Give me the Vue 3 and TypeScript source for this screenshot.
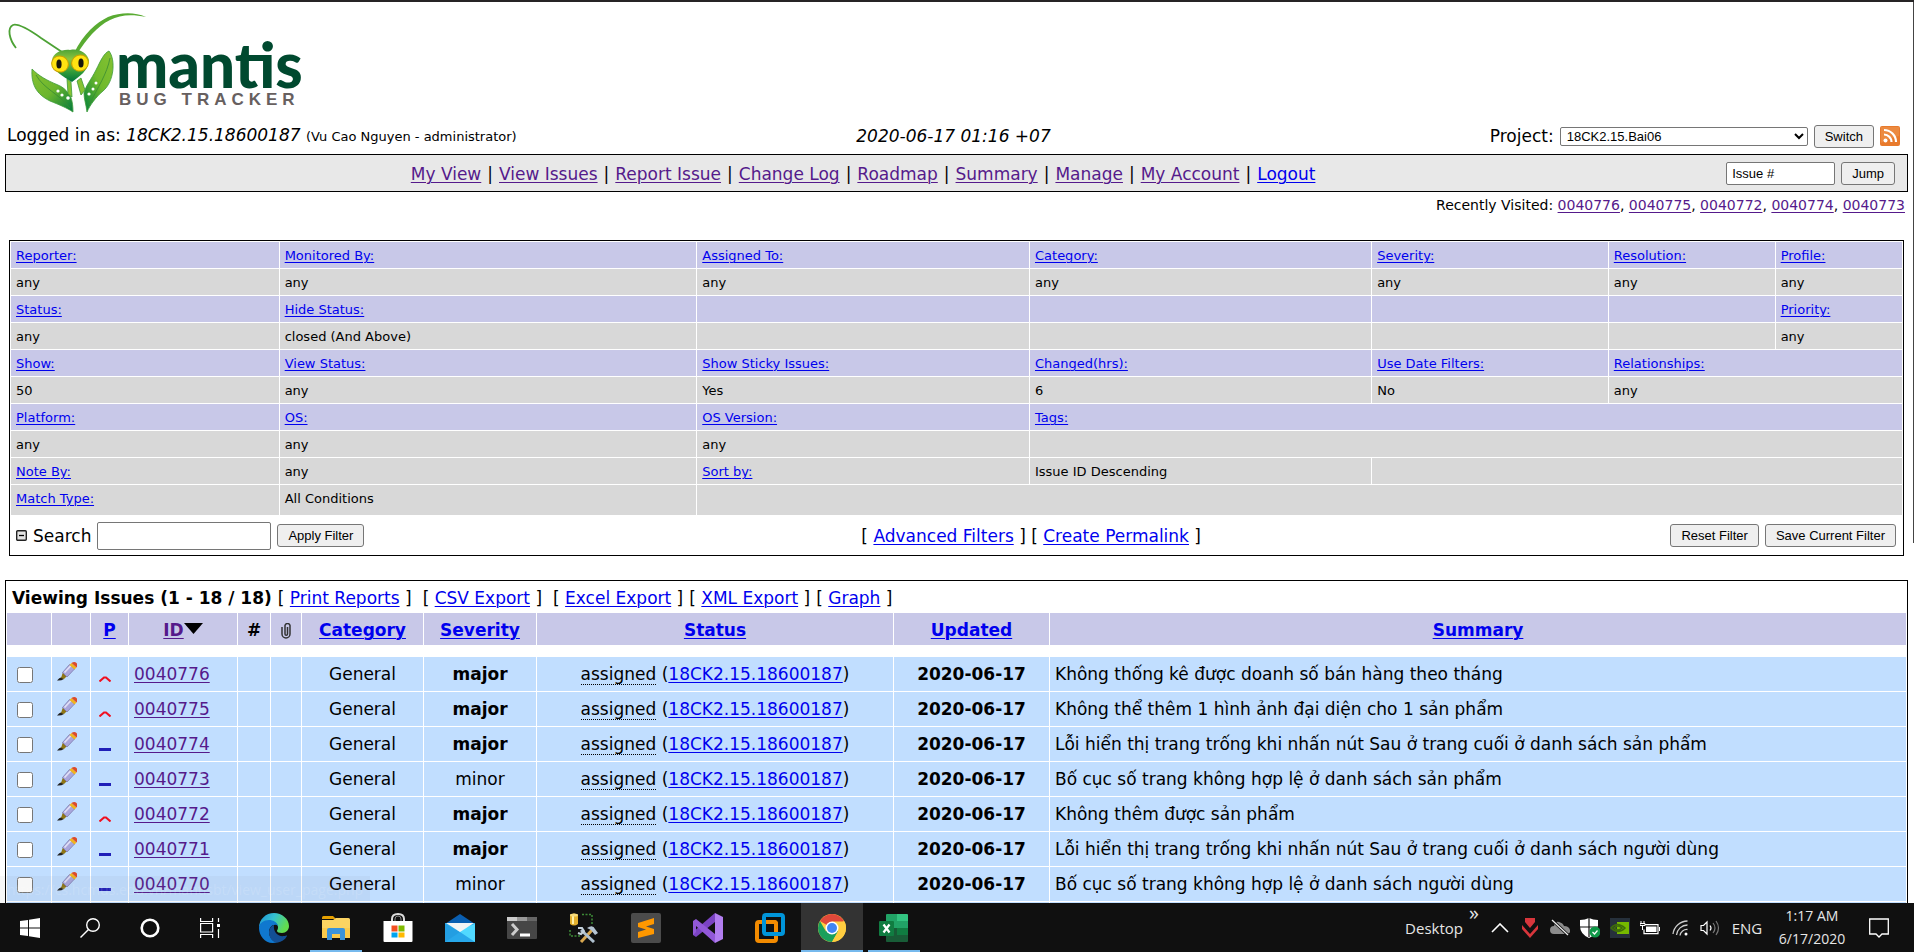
<script setup lang="ts">
import { ref } from 'vue'

interface FilterCell {
  text?: string
  link?: boolean
  span?: number
}
interface FilterRow {
  head: boolean
  cells: FilterCell[]
}
interface Issue {
  id: string
  high: boolean
  severity: string
  summary: string
}

const navLinks = ['My View', 'View Issues', 'Report Issue', 'Change Log', 'Roadmap', 'Summary', 'Manage', 'My Account', 'Logout']
const recent = ['0040776', '0040775', '0040772', '0040774', '0040773']

const heads = (items: FilterCell[]): FilterRow => ({ head: true, cells: items })
const values = (items: FilterCell[]): FilterRow => ({ head: false, cells: items })
const l = (text: string, span = 1): FilterCell => ({ text, link: true, span })
const t = (text = '', span = 1): FilterCell => ({ text, span })

const filterRows: FilterRow[] = [
  heads([l('Reporter:'), l('Monitored By:'), l('Assigned To:'), l('Category:'), l('Severity:'), l('Resolution:'), l('Profile:')]),
  values([t('any'), t('any'), t('any'), t('any'), t('any'), t('any'), t('any')]),
  heads([l('Status:'), l('Hide Status:'), t(), t(), t(), t(), l('Priority:')]),
  values([t('any'), t('closed (And Above)'), t(), t(), t(), t(), t('any')]),
  heads([l('Show:'), l('View Status:'), l('Show Sticky Issues:'), l('Changed(hrs):'), l('Use Date Filters:'), l('Relationships:', 2)]),
  values([t('50'), t('any'), t('Yes'), t('6'), t('No'), t('any', 2)]),
  heads([l('Platform:'), l('OS:'), l('OS Version:'), l('Tags:', 4)]),
  values([t('any'), t('any'), t('any'), t('', 4)]),
  values([l('Note By:'), t('any'), l('Sort by:'), t('Issue ID Descending'), t('', 3)]),
  values([l('Match Type:'), t('All Conditions'), t('', 5)]),
]

const exportLinks = ['Print Reports', 'CSV Export', 'Excel Export', 'XML Export', 'Graph']
const assignee = '18CK2.15.18600187'

const issues: Issue[] = [
  { id: '0040776', high: true, severity: 'major', summary: 'Không thống kê được doanh số bán hàng theo tháng' },
  { id: '0040775', high: true, severity: 'major', summary: 'Không thể thêm 1 hình ảnh đại diện cho 1 sản phẩm' },
  { id: '0040774', high: false, severity: 'major', summary: 'Lỗi hiển thị trang trống khi nhấn nút Sau ở trang cuối ở danh sách sản phẩm' },
  { id: '0040773', high: false, severity: 'minor', summary: 'Bố cục số trang không hợp lệ ở danh sách sản phẩm' },
  { id: '0040772', high: true, severity: 'major', summary: 'Không thêm được sản phẩm' },
  { id: '0040771', high: false, severity: 'major', summary: 'Lỗi hiển thị trang trống khi nhấn nút Sau ở trang cuối ở danh sách người dùng' },
  { id: '0040770', high: false, severity: 'minor', summary: 'Bố cục số trang không hợp lệ ở danh sách người dùng' },
]

const project = ref('18CK2.15.Bai06')
const jumpTo = ref('Issue #')
const search = ref('')
const selected = ref<string[]>([])
</script>

<template>
  <div class="desktop">
    <main class="page">
      <svg class="logo" viewBox="0 2 310 111" role="img" aria-label="Mantis Bug Tracker">
        <defs>
          <linearGradient id="leaf" x1="0" y1="0" x2="1" y2="1">
            <stop offset="0" stop-color="#86c232" />
            <stop offset="0.5" stop-color="#6bb52d" />
            <stop offset="1" stop-color="#007a3d" />
          </linearGradient>
          <linearGradient id="leafRight" x1="1" y1="0" x2="0" y2="1">
            <stop offset="0" stop-color="#86c232" />
            <stop offset="0.5" stop-color="#6fb92c" />
            <stop offset="1" stop-color="#00803c" />
          </linearGradient>
          <linearGradient id="face" x1="0" y1="0" x2="0" y2="1">
            <stop offset="0" stop-color="#4fa336" />
            <stop offset="0.3" stop-color="#8cc63f" />
            <stop offset="0.7" stop-color="#2f9a3a" />
            <stop offset="1" stop-color="#00743b" />
          </linearGradient>
        </defs>
        <path d="M16 48C9 39 7 28 13 25C19 23 31 31 41 38L65 54" fill="none" stroke="#4da235" stroke-width="1.800" />
        <path d="M74 53C84 33 96 23 108 17C121 12 135 12 146 17C131 14 120 15 110 20C96 27 87 39 77 54Z" fill="#59ab32" />
        <path d="M32 69C31 84 36 94 50 101C60 105 67 108 73 112C73 105 72 98 69 94C66 90 63 87 58 85C46 80 39 76 32 69Z" fill="url(#leaf)" stroke="#3c9b38" stroke-width=".8" />
        <path d="M109 51C116 60 114 82 103 91C96 97 90 105 87 112C86 104 84 99 84 93C86 85 91 80 96 70C101 60 104 53 109 51Z" fill="url(#leafRight)" stroke="#3c9b38" stroke-width=".8" />
        <path d="M36 75C44 89 58 93 70 108M110 58C107 74 98 87 89 105" fill="none" stroke="#3a8a33" stroke-width=".8" />
        <path d="M67 79L71 82L72 97L68 94ZM77 81L81 78L85 90L81 95Z" fill="#86c232" stroke="#3c9b38" stroke-width=".8" />
        <path d="M52 60C53 53 62 49 70 50C79 48 87 53 89 60C88 71 80 76 72 82C62 76 53 71 52 60Z" fill="url(#face)" />
        <ellipse cx="60" cy="64" rx="8.500" ry="8" fill="#ffe312" stroke="#c8a200" transform="rotate(25 60 64)" />
        <ellipse cx="80" cy="63" rx="8.500" ry="8" fill="#ffe312" stroke="#c8a200" transform="rotate(-25 80 63)" />
        <ellipse cx="59" cy="64" rx="2.600" ry="4.500" fill="#17150c" />
        <ellipse cx="81" cy="63" rx="2.600" ry="4.500" fill="#17150c" />
        <g fill="#fff"><circle cx="58" cy="91" r="1.600" /><circle cx="62" cy="95" r="1.600" /><circle cx="68" cy="98" r="1.800" /><circle cx="96" cy="83" r="1.500" /><circle cx="93" cy="89" r="1.500" /><circle cx="89" cy="94" r="1.600" /></g>
        <text class="logo-name" x="116" y="88">mantis</text>
        <text class="logo-sub" x="119" y="105">BUG TRACKER</text>
      </svg>

      <header class="login">
        <div>Logged in as: <i>18CK2.15.18600187</i> <span class="small">(Vu Cao Nguyen - administrator)</span></div>
        <time class="now">2020-06-17 01:16 +07</time>
        <form class="project" @submit.prevent>
          <label for="project">Project:</label>
          <select id="project" v-model="project"><option>18CK2.15.Bai06</option></select>
          <button type="submit">Switch</button>
          <a href="#" class="rss" aria-label="RSS">
            <svg width="20" height="20" viewBox="0 0 20 20">
              <rect width="20" height="20" rx="2" fill="#e87a2c" />
              <path d="M1 1h18v9Q10 12 1 17z" fill="#f09a54" opacity=".5" />
              <circle cx="5.500" cy="14.500" r="2" fill="#fff" />
              <path d="M4 8.500a7.500 7.500 0 0 1 7.500 7.500M4 4a12 12 0 0 1 12 12" fill="none" stroke="#fff" stroke-width="2.200" />
            </svg>
          </a>
        </form>
      </header>

      <nav class="menu">
        <div class="menu-links">
          <template v-for="(name, i) in navLinks" :key="name">
            <span v-if="i">|</span>
            <a href="#" :class="{ visited: name !== 'Logout' }">{{ name }}</a>
          </template>
        </div>
        <form class="jump" @submit.prevent>
          <input v-model="jumpTo" type="text" aria-label="Issue number" />
          <button type="submit">Jump</button>
        </form>
      </nav>

      <p class="recent">
        Recently Visited: <template v-for="(id, i) in recent" :key="id"><template v-if="i">, </template><a href="#" class="visited">{{ id }}</a></template>
      </p>

      <form class="filter" @submit.prevent>
        <table class="filter-table">
          <colgroup>
            <col v-for="n in 7" :key="n" :class="'f' + n" />
          </colgroup>
          <tbody>
            <tr v-for="(row, r) in filterRows" :key="r" :class="{ head: row.head }">
              <td v-for="(cell, c) in row.cells" :key="c" :colspan="cell.span">
                <a v-if="cell.link" href="#">{{ cell.text }}</a>
                <template v-else>{{ cell.text }}</template>
              </td>
            </tr>
          </tbody>
        </table>
        <div class="search-row">
          <div class="search-box">
            <svg width="11" height="11" viewBox="0 0 11 11" aria-hidden="true">
              <rect x=".7" y=".7" width="9.600" height="9.600" rx="1" fill="#e4e4e4" stroke="#222" stroke-width="1.400" />
              <path d="M3 5.500h5" stroke="#000" stroke-width="1.300" />
            </svg>
            <label for="search">Search</label>
            <input id="search" v-model="search" type="text" />
            <button type="submit">Apply Filter</button>
          </div>
          <div class="search-links">[ <a href="#">Advanced Filters</a> ] [ <a href="#">Create Permalink</a> ]</div>
          <div class="search-end">
            <button type="reset">Reset Filter</button>
            <button type="button">Save Current Filter</button>
          </div>
        </div>
      </form>

      <section class="issues">
        <div class="issues-title">
          <b>Viewing Issues (1 - 18 / 18)</b>
          <span v-for="(name, i) in exportLinks" :key="name" :class="{ apart: i === 1 || i === 2 }">[ <a href="#">{{ name }}</a> ]</span>
        </div>
        <table class="issue-table">
          <colgroup>
            <col v-for="n in 11" :key="n" :class="'c' + n" />
          </colgroup>
          <thead>
            <tr>
              <th></th>
              <th></th>
              <th><a href="#">P</a></th>
              <th><a href="#" class="visited">ID</a><svg class="sort" width="19" height="11" viewBox="0 0 19 11"><path d="M0 0h19L9.500 11z" /></svg></th>
              <th>#</th>
              <th>
                <svg width="12" height="16" viewBox="0 0 12 16" fill="none" stroke="#333" aria-label="Attachments">
                  <path d="M2 4v7a4 4 0 0 0 8 0V3.500a2.500 2.500 0 0 0-5-1V11a1 1 0 0 0 2.500 0V4" stroke-width="1.500" />
                </svg>
              </th>
              <th><a href="#">Category</a></th>
              <th><a href="#">Severity</a></th>
              <th><a href="#">Status</a></th>
              <th><a href="#">Updated</a></th>
              <th><a href="#">Summary</a></th>
            </tr>
          </thead>
          <tbody>
            <tr class="gap"><td colspan="11"></td></tr>
            <tr v-for="issue in issues" :key="issue.id">
              <td><input v-model="selected" type="checkbox" :value="issue.id" :aria-label="'Select ' + issue.id" /></td>
              <td>
                <a href="#" class="icon-link" aria-label="Edit">
                  <svg width="20" height="20" viewBox="0 0 20 20">
                    <path d="M0 18.500q2-3 5-3.500l2 2q-3 2-7 1.500z" fill="#222" />
                    <path d="M4 16l2-6 4 4-3 3z" fill="#8f7615" />
                    <path d="M5.500 10.500l7-8 5 4.500-7.500 8z" fill="#a9a6dc" stroke="#7773a8" stroke-width=".7" />
                    <path d="M7.500 10.500l6.500-7" stroke="#e0dff6" stroke-width="1.800" />
                    <path d="M12.500 3l2-2 5 4.500-2 2z" fill="#f2b51d" />
                    <path d="M14.500 1q3-2 5 0t0 4.500z" fill="#dc4b2a" />
                  </svg>
                </a>
              </td>
              <td class="priority">
                <svg v-if="issue.high" width="12" height="6" viewBox="0 0 12 6"><path d="M.5 5.500L5 1.500h2l4.500 4" fill="none" stroke="#f01020" stroke-width="2" /></svg>
                <svg v-else width="12" height="6" viewBox="0 0 12 6"><path d="M0 3.500h12" stroke="#1f1fb8" stroke-width="3" /></svg>
              </td>
              <td class="left"><a href="#" class="visited">{{ issue.id }}</a></td>
              <td></td>
              <td></td>
              <td>General</td>
              <td :class="{ strong: issue.severity === 'major' }">{{ issue.severity }}</td>
              <td><span class="state">assigned</span> (<a href="#">{{ assignee }}</a>)</td>
              <td class="strong">2020-06-17</td>
              <td class="left">{{ issue.summary }}</td>
            </tr>
            <tr><td v-for="n in 11" :key="n"></td></tr>
          </tbody>
        </table>
      </section>
      <div class="status-hint">https://cs.hcmus.edu.vn/mantisbt/view_user_page.php</div>
    </main>

    <footer class="taskbar">
      <button class="sys" aria-label="Start">
        <svg width="20" height="20" viewBox="0 0 20 20" fill="#fff"><path d="M0 3l8-1v7.500H0zM9 1.800L20 0v9.500H9zM0 10.500h8V18l-8-1zM9 10.500h11V20L9 18.200z" /></svg>
      </button>
      <button class="sys" aria-label="Search">
        <svg width="20" height="20" viewBox="0 0 20 20" fill="none" stroke="#fff" stroke-width="1.400"><circle cx="13" cy="7" r="6.300" /><path d="M8.500 11.500L.5 19.500" /></svg>
      </button>
      <button class="sys" aria-label="Cortana">
        <svg width="20" height="20" viewBox="0 0 20 20"><circle cx="10" cy="10" r="8.300" fill="none" stroke="#fff" stroke-width="2.600" /></svg>
      </button>
      <button class="sys" aria-label="Task view">
        <svg width="20" height="20" viewBox="0 0 20 20" fill="none" stroke="#fff" stroke-width="1.200"><path d="M.6 0v3.500h12V0M.6 20v-3.500h12V20M.6 5.500h12v8.500H.6zM18.500 0v4M18.500 11v9" /><rect x="17" y="6" width="3" height="3" fill="#fff" stroke="none" /></svg>
      </button>
      <span class="gap-small"></span>
      <button class="app" aria-label="Edge">
        <svg width="30" height="30" viewBox="0 0 30 30">
          <defs>
            <linearGradient id="edgeTop" x1="0" x2="1" y1="0" y2="0.400"><stop offset="0" stop-color="#1b8fd8" /><stop offset=".5" stop-color="#35c1d0" /><stop offset="1" stop-color="#62dc4e" /></linearGradient>
          </defs>
          <path d="M0 15C0 6 7 0 15 0s15 6 15 13c0 4-3 7-7 7-3 0-5-1-5-2s1-1 1-4-4-6-9-6S1 11 0 15z" fill="url(#edgeTop)" />
          <path d="M0 15c0-5 5-8 10-8 4 0 8 2 9 6-3-3-9 0-9 6 0 5 4 10 9 10C8 33 0 24 0 15z" fill="#0f78cf" />
          <path d="M10 19c0-3 2-6 5-7-1 7 4 12 10 11 2 0 3-1 3 0-2 4-6 6-9 6.500C14 30 10 25 10 19z" fill="#134f94" />
        </svg>
      </button>
      <button class="app open" aria-label="File Explorer">
        <svg width="28" height="24" viewBox="0 0 28 24">
          <path d="M0 1.500Q0 0 1.500 0H11l3 3H0z" fill="#e5a000" /><path d="M0 4h11l3-2h12.500Q28 2 28 3.500V22H0z" fill="#fcd462" />
          <path d="M0 12h28v10H0z" fill="#f8c33c" opacity=".6" /><path d="M5 24V14q0-2 2-2h14q2 0 2 2v10h-5v-6h-8v6z" fill="#3a93da" />
        </svg>
      </button>
      <button class="app" aria-label="Store">
        <svg width="30" height="30" viewBox="0 0 30 30">
          <path d="M9 8V6q0-5 6-5t6 5v2" fill="none" stroke="#ddd" stroke-width="2" /><path d="M12 8V6q0-3 3-3t3 3v2" fill="none" stroke="#888" />
          <path d="M.5 8h29v20q0 1-1 1h-27q-1 0-1-1z" fill="#fff" />
          <path d="M8.500 12.500h6v6h-6z" fill="#f25022" /><path d="M15.500 12.500h6v6h-6z" fill="#7fba00" /><path d="M8.500 19.500h6v5h-6z" fill="#00a4ef" /><path d="M15.500 19.500h6v5h-6z" fill="#ffb900" />
        </svg>
      </button>
      <button class="app" aria-label="Mail">
        <svg width="30" height="28" viewBox="0 0 30 28"><path d="M0 10L15 0l15 10z" fill="#0a5eb0" /><path d="M0 9h30v19H0z" fill="#28a8ea" /><path d="M30 10v18L12 16z" fill="#50d9ff" /><path d="M0 10l15 8-15 10z" fill="#239ee2" /><path d="M1 9h28l-14 9z" fill="#f4f4f4" /></svg>
      </button>
      <button class="app" aria-label="Terminal">
        <svg width="30" height="22" viewBox="0 0 30 22"><rect width="30" height="22" rx="1" fill="#464646" /><path d="M0 0h10v4H0z" fill="#ccc" /><path d="M10 0h10v4H10z" fill="#999" /><path d="M20 0h10v4H20z" fill="#666" /><path d="M5 7l5 5.500L5 18" fill="none" stroke="#ccc" stroke-width="3" /><path d="M13 16.500h10v3H13z" fill="#fff" /></svg>
      </button>
      <button class="app" aria-label="SQL Server Management Studio">
        <svg width="30" height="30" viewBox="0 0 30 30">
          <path d="M1 2q4-3 8 0v9q-4 3-8 0z" fill="#e3b02e" /><path d="M3 2h2v9H3z" fill="#fff0a8" /><ellipse cx="5" cy="2" rx="4" ry="1.500" fill="#f8dc7a" />
          <path d="M13 1.500h10V12M1 17v6h10" fill="none" stroke="#3d8b37" stroke-dasharray="2 1.500" stroke-width="1.500" />
          <path d="M12 29L24 16" stroke="#d9a850" stroke-width="3" /><path d="M12 17l13 12" stroke="#aebfce" stroke-width="3" />
          <path d="M18 15q6-4 8 1l3 4-3 2-4-5z" fill="#b6c4d2" /><path d="M9 15l4 0 2 3-3 3-3-1" fill="none" stroke="#c3d0db" stroke-width="2" />
        </svg>
      </button>
      <button class="app" aria-label="Sublime Text">
        <svg width="30" height="30" viewBox="0 0 30 30"><rect width="30" height="30" rx="2" fill="#4b4b4b" /><path d="M7 10l16-5v6l-8 2.500 8 2.500v5L7 25v-6l8-2.500-8-2.500z" fill="#ff9800" /></svg>
      </button>
      <button class="app" aria-label="Visual Studio">
        <svg width="30" height="30" viewBox="0 0 30 30"><path d="M22 0l8 4v22l-8 4z" fill="#b27ef0" /><path d="M22 0v9L3 24l-3-2v-3L22 0z" fill="#7b43c4" /><path d="M0 8l3-2 19 15v9L3 13v6l-3 3z" fill="#9258d8" /></svg>
      </button>
      <button class="app" aria-label="VMware Workstation">
        <svg width="30" height="30" viewBox="0 0 30 30" fill="none" stroke-width="4"><rect x="2" y="9" width="19" height="19" rx="2" stroke="#f38b00" /><rect x="9" y="2" width="19" height="19" rx="2" stroke="#0095da" /><path d="M12 9h7q2 0 2 2v4" stroke="#f38b00" /></svg>
      </button>
      <button class="app open current" aria-label="Chrome">
        <svg width="28" height="28" viewBox="0 0 28 28"><circle cx="14" cy="14" r="14" fill="#ffcd40" /><path d="M14 14L1.900 7A14 14 0 0 1 26.100 7z" fill="#e0483a" /><path d="M1.900 7A14 14 0 0 0 14 28l6-10.500L14 14 8 17.500z" fill="#1a9f5b" /><path d="M14 7.500h12.400A14 14 0 0 1 14 28l6-10.500z" fill="#ffcd40" /><circle cx="14" cy="14" r="6.500" fill="#fff" /><circle cx="14" cy="14" r="5" fill="#4285f4" /></svg>
      </button>
      <button class="app open" aria-label="Excel">
        <svg width="30" height="28" viewBox="0 0 30 28"><path d="M7 1q0-1 1-1h10v14H7z" fill="#21a366" /><path d="M18 0h10q1 0 1 1v6H18z" fill="#33c481" /><path d="M18 7h11v7H18z" fill="#21a366" /><path d="M7 14h11v14H8q-1 0-1-1z" fill="#185c37" /><path d="M18 14h11v7H18z" fill="#107c41" /><path d="M18 21h11v6q0 1-1 1H18z" fill="#185c37" /><rect y="7" width="15" height="15" rx="1" fill="#107c41" /><path d="M4.500 10.500l6 8M10.500 10.500l-6 8" stroke="#fff" stroke-width="2.200" /></svg>
      </button>

      <div class="tray">
        <span>Desktop</span>
        <button class="more" aria-label="More">»</button>
        <button class="tiny" aria-label="Show hidden icons"><svg width="18" height="10" viewBox="0 0 18 10"><path d="M1 9l8-8 8 8" fill="none" stroke="#fff" stroke-width="1.600" /></svg></button>
        <button class="tiny" aria-label="Security"><svg width="16" height="20" viewBox="0 0 16 20" fill="#d8363c"><path d="M3 0h10v4l-5 6-5-6zM0 7l8 9 8-9v4l-8 9-8-9z" /></svg></button>
        <button class="tiny" aria-label="OneDrive"><svg width="20" height="18" viewBox="0 0 20 18"><path d="M4 15a4 4 0 0 1 0-8Q5 2 9 3t5 4q5 0 6 4t-4 4z" fill="#8c8c8c" /><path d="M2 1l16 15" stroke="#101010" stroke-width="3" /><path d="M2 1l16 15" stroke="#eee" stroke-width="1.200" /></svg></button>
        <button class="tiny" aria-label="Defender"><svg width="20" height="20" viewBox="0 0 20 20"><path d="M9 0q4 2 9 2v6q0 8-9 12Q0 16 0 8V2q5 0 9-2z" fill="#fff" /><path d="M9 0v19M0 9h18" stroke="#101010" stroke-width="1.200" /><circle cx="15" cy="14" r="5.500" fill="#109848" /><path d="M12.500 14l2 2 3-3.500" fill="none" stroke="#fff" stroke-width="1.200" /></svg></button>
        <button class="tiny" aria-label="Nvidia"><svg width="20" height="20" viewBox="0 0 20 20"><path d="M0 0h20v20H0z" fill="#26303b" /><path d="M7 4h12v12H7z" fill="#76b900" /><path d="M1 10q6-7 14 0-7 7-14 0zM4 10q4-4 8 0-4 4-8 0z" fill="none" stroke="#3e6d0a" stroke-width="1.500" /></svg></button>
        <button class="tiny" aria-label="Battery"><svg width="20" height="14" viewBox="0 0 20 14"><path d="M5 3.600h13v9H4v-4" fill="none" stroke="#fff" stroke-width="1.200" /><path d="M6 5.500h10.500v5.500H6z" fill="#fff" /><path d="M19 6h1v4h-1z" fill="#fff" /><path d="M1 0v2M4 0v2M0 2.500h5v2H0zM2.500 4v5" stroke="#fff" fill="none" /></svg></button>
        <button class="tiny" aria-label="Wi-Fi"><svg width="16" height="16" viewBox="0 0 16 16" fill="none" stroke="#ccc" stroke-width="1.300"><path d="M1 14A15 15 0 0 1 15.500 1M4.500 15A11 11 0 0 1 15.500 5M8 15.500a7 7 0 0 1 7.500-6" /><circle cx="14" cy="14" r="1.500" fill="#fff" stroke="none" /></svg></button>
        <button class="tiny" aria-label="Volume"><svg width="20" height="16" viewBox="0 0 20 16" fill="none" stroke="#fff" stroke-width="1.200"><path d="M1 5.500h2.500L7 2v12l-3.500-3.500H1z" /><path d="M10 5.500q2 2.500 0 5" /><path d="M13 3q4 5 0 10M16 1q5 7 0 14" stroke="#777" /></svg></button>
        <button class="lang">ENG</button>
        <button class="clock"><span>1:17 AM</span><span>6/17/2020</span></button>
        <button class="note" aria-label="Notifications"><svg width="20" height="20" viewBox="0 0 20 20" fill="none" stroke="#fff" stroke-width="1.300"><path d="M.7 1h18.600v15H13l-3 3-3-3H.7z" /></svg></button>
      </div>
    </footer>
  </div>
</template>

<style>
body {
  margin: 0;
}
</style>

<style scoped>
.desktop {
  box-sizing: border-box;
  height: 100vh;
  display: flex;
  flex-direction: column;
  background: #fff;
  border-top: 2px solid #262425;
  font: 17px/20px 'DejaVu Sans', Verdana, sans-serif;
  color: #000;
}
.page {
  position: relative;
  flex: 1;
  min-height: 0;
  overflow: hidden;
  padding: 0 6px 0 5px;
}
.page::after {
  content: '';
  position: absolute;
  top: 0;
  right: 0;
  width: 1px;
  height: 60%;
  background: #444;
}
.logo {
  display: block;
  width: 310px;
  height: 111px;
  margin-left: -5px;
}
.logo-name {
  font: 900 62px Lato, sans-serif;
  fill: #00492f;
}
.logo-sub {
  font: bold 17px 'Liberation Sans', Arial, sans-serif;
  letter-spacing: 5px;
  fill: #67605f;
}
a {
  color: #00e;
  text-underline-offset: 2px;
  text-decoration-thickness: 1px;
}
a.visited {
  color: #551a8b;
}
button,
input,
select {
  box-sizing: border-box;
  font: 13px 'Liberation Sans', Arial, sans-serif;
  color: #000;
  margin: 0;
}
.page button {
  height: 23px;
  padding: 0 10px;
  background: #efefef;
  border: 1px solid #767676;
  border-radius: 3px;
}
input[type='text'] {
  background: #fff;
  border: 1px solid #767676;
  border-radius: 2px;
}
.login {
  display: grid;
  grid-template-columns: 1fr auto 1fr;
  align-items: center;
  height: 41px;
  padding: 5px 8px 0 2px;
  box-sizing: border-box;
}
.small {
  font-size: 13px;
}
.now {
  font-style: italic;
}
.project {
  display: flex;
  align-items: center;
  justify-content: flex-end;
  gap: 6px;
}
.project select {
  width: 248px;
  height: 19px;
  padding: 0 2px;
  background: #fff;
  border: 1px solid #767676;
  border-radius: 2px;
}
.rss,
.rss svg {
  display: block;
}
.menu {
  display: flex;
  align-items: center;
  box-sizing: border-box;
  height: 38px;
  padding: 0 12px 0 0;
  border: 1px solid #000;
  background: #e8e8e8;
}
.menu-links {
  flex: 1;
  display: flex;
  justify-content: center;
  gap: 6px;
  padding: 2px 6px 0 0;
}
.jump {
  display: flex;
  gap: 6px;
}
.jump input {
  width: 109px;
  padding: 0 5px;
}
.recent {
  margin: 4px 3px 0 0;
  text-align: right;
  font-size: 14px;
  line-height: 18px;
}
.filter {
  margin: 26px 4px 0;
  border: 1px solid #000;
}
.filter-table {
  width: 100%;
  table-layout: fixed;
  border-spacing: 1px;
  font-size: 13px;
  line-height: 18px;
}
.filter-table td {
  height: 18px;
  padding: 5px 4px 3px 5px;
  background: #d8d8d8;
}
.filter-table .head td {
  background: #c8c8e8;
}
.filter-table tr:last-child td {
  padding-bottom: 7px;
}
.f1 {
  width: 14.200%;
}
.f2 {
  width: 22.100%;
}
.f3 {
  width: 17.600%;
}
.f4 {
  width: 18.100%;
}
.f5 {
  width: 12.500%;
}
.f6 {
  width: 8.800%;
}
.search-row {
  display: grid;
  grid-template-columns: 40% 28% 32%;
  align-items: center;
  height: 39px;
  padding: 0 7px 0 6px;
}
.search-links {
  text-align: center;
}
.search-box,
.search-end {
  display: flex;
  align-items: center;
  gap: 6px;
}
.search-end {
  justify-content: flex-end;
}
.search-box input {
  width: 174px;
  height: 28px;
}
.issues {
  margin-top: 24px;
  border: 1px solid #000;
}
.issues-title {
  display: flex;
  gap: 6px;
  padding: 7px 6px 4px;
}
.apart {
  margin-left: 5px;
}
.issue-table {
  width: 100%;
  table-layout: fixed;
  border-spacing: 1px;
}
.issue-table th,
.issue-table td {
  box-sizing: border-box;
  height: 34px;
  padding: 0 5px;
  text-align: center;
  background: #c1deff;
}
.issue-table th {
  height: 32px;
  padding-top: 2px;
  background: #c8c8e8;
}
.issue-table .gap td {
  height: 10px;
  background: #fff;
}
.issue-table .left {
  text-align: left;
}
.issue-table .strong {
  font-weight: bold;
}
.issue-table .priority {
  padding: 8px 12px 0 8px;
  text-align: left;
}
.issue-table svg {
  vertical-align: middle;
}
.issue-table .icon-link svg {
  margin: 0 8px 4px 0;
}
.issue-table .sort {
  vertical-align: 2px;
}
.issue-table input {
  width: 16px;
  height: 16px;
  margin: 0 8px 0 0;
  vertical-align: middle;
}
.state {
  border-bottom: 1px dotted #000;
}
.c1 {
  width: 44px;
}
.c2 {
  width: 38px;
}
.c3 {
  width: 37px;
}
.c4 {
  width: 108px;
}
.c5 {
  width: 32px;
}
.c6 {
  width: 30px;
}
.c7 {
  width: 121px;
}
.c8 {
  width: 112px;
}
.c9 {
  width: 356px;
}
.c10 {
  width: 155px;
}
.status-hint {
  position: absolute;
  left: 0;
  bottom: 0;
  padding: 3px 7px;
  font: 14px/21px 'Open Sans', sans-serif;
  background: rgba(120, 120, 120, 0.06);
  color: rgba(255, 255, 255, 0.14);
}
.taskbar {
  flex: none;
  display: flex;
  height: 49px;
  background: #101010;
  color: #e6e6e6;
  font: 15px/20px 'Open Sans', 'Noto Sans', sans-serif;
}
.taskbar button {
  display: flex;
  align-items: center;
  justify-content: center;
  padding: 0;
  border: 0;
  background: none;
  color: inherit;
  font: inherit;
}
.taskbar .sys {
  width: 60px;
}
.gap-small {
  width: 3px;
}
.taskbar .app {
  position: relative;
  width: 62px;
}
.taskbar .open::after {
  content: '';
  position: absolute;
  left: 5px;
  right: 5px;
  bottom: 0;
  height: 2px;
  background: #76b9ed;
}
.taskbar .current {
  background: #333;
}
.taskbar .current::after {
  left: 0;
  right: 0;
}
.tray {
  display: flex;
  align-items: center;
  margin-left: auto;
  padding-right: 11px;
}
.tray button {
  height: 49px;
}
.taskbar .more {
  width: 22px;
  align-items: flex-start;
  font-size: 20px;
}
.taskbar .tiny {
  width: 30px;
}
.taskbar .lang {
  width: 44px;
}
.taskbar .clock {
  width: 86px;
  flex-direction: column;
  gap: 3px;
  font-size: 14px;
}
.taskbar .note {
  width: 48px;
}
</style>
